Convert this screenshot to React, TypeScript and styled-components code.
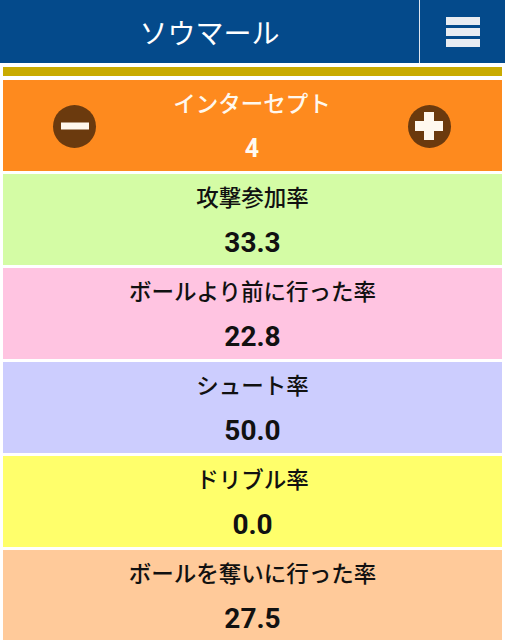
import React from "react";
import styled, { createGlobalStyle } from "styled-components";

const GlobalStyle = createGlobalStyle`
    html, body {
        margin: 0;
        padding: 0;
        background-color: #ffffff;
        font-family: Roboto, "Noto Sans CJK JP", sans-serif;
    }
`;

const Page = styled.div`
    width: 505px;
    min-height: 640px;
    background-color: #ffffff;
`;

const Header = styled.header`
    height: 63px;
    background-color: #044a8b;
    display: grid;
    grid-template-columns: 420px 1fr;
`;

const Title = styled.h1`
    margin: 0;
    display: flex;
    align-items: center;
    justify-content: center;
    color: #ffffff;
    font-size: 28px;
    font-weight: 400;
    border-right: 1.5px solid #dfe6ef;
`;

const MenuButton = styled.div`
    display: flex;
    flex-direction: column;
    align-items: center;
    justify-content: center;
    gap: 3px;
    padding-top: 1px;
`;

const MenuBar = styled.span`
    width: 34px;
    height: 8px;
    background-color: #e9ecf1;
`;

const Content = styled.main`
    padding: 4px 3px 0;
    display: flex;
    flex-direction: column;
    gap: 3px;
`;

const GoldBar = styled.div`
    height: 9px;
    background-color: #c9ab00;
    margin-bottom: 1px;
`;

const Panel = styled.section<{ $bg: string }>`
    height: 91px;
    background-color: ${(p) => p.$bg};
    display: grid;
    grid-template-rows: 48px 42px;
    text-align: center;
    overflow: hidden;
`;

const Label = styled.div<{ $light?: boolean }>`
    font-size: 22.5px;
    font-weight: 500;
    line-height: 48px;
    color: ${(p) => (p.$light ? "#fff8ee" : "#111111")};
`;

const Value = styled.div<{ $small?: boolean; $light?: boolean }>`
    font-size: ${(p) => (p.$small ? "25px" : "28px")};
    font-weight: 700;
    line-height: 42px;
    color: ${(p) => (p.$light ? "#fffaf2" : "#111111")};
`;

const CounterPanel = styled.section`
    height: 91px;
    background-color: #fe8a1e;
    display: flex;
    align-items: center;
    justify-content: space-between;
    padding: 0 51px 0 50px;
`;

const CounterText = styled.div`
    display: grid;
    grid-template-rows: 48px 42px;
    text-align: center;
    height: 91px;
`;

const RoundButton = styled.button`
    width: 43px;
    height: 43px;
    padding: 0;
    border: none;
    border-radius: 50%;
    background-color: #6b3a0e;
    display: flex;
    align-items: center;
    justify-content: center;
    margin-top: 1px;
`;

const MinusIcon = () => (
    <svg width="28" height="8" viewBox="0 0 28 8">
        <rect x="0" y="0.5" width="28" height="7" fill="#fff8ee" />
    </svg>
);

const PlusIcon = () => (
    <svg width="28" height="28" viewBox="0 0 28 28">
        <rect x="0" y="9" width="28" height="10" fill="#fff8ee" />
        <rect x="9" y="0" width="10" height="28" fill="#fff8ee" />
    </svg>
);

const stats = [
    { label: "攻撃参加率", value: "33.3", bg: "#d4fca5" },
    { label: "ボールより前に行った率", value: "22.8", bg: "#ffc4e1" },
    { label: "シュート率", value: "50.0", bg: "#cccdfe" },
    { label: "ドリブル率", value: "0.0", bg: "#ffff6b" },
    { label: "ボールを奪いに行った率", value: "27.5", bg: "#ffca9a" },
];

function App() {
    return (
        <Page>
            <GlobalStyle />
            <Header>
                <Title>ソウマール</Title>
                <MenuButton>
                    <MenuBar />
                    <MenuBar />
                    <MenuBar />
                </MenuButton>
            </Header>
            <Content>
                <GoldBar />
                <CounterPanel>
                    <RoundButton aria-label="minus">
                        <MinusIcon />
                    </RoundButton>
                    <CounterText>
                        <Label $light>インターセプト</Label>
                        <Value $small $light>4</Value>
                    </CounterText>
                    <RoundButton aria-label="plus">
                        <PlusIcon />
                    </RoundButton>
                </CounterPanel>
                {stats.map((s) => (
                    <Panel key={s.label} $bg={s.bg}>
                        <Label>{s.label}</Label>
                        <Value>{s.value}</Value>
                    </Panel>
                ))}
            </Content>
        </Page>
    );
}

export default App;
